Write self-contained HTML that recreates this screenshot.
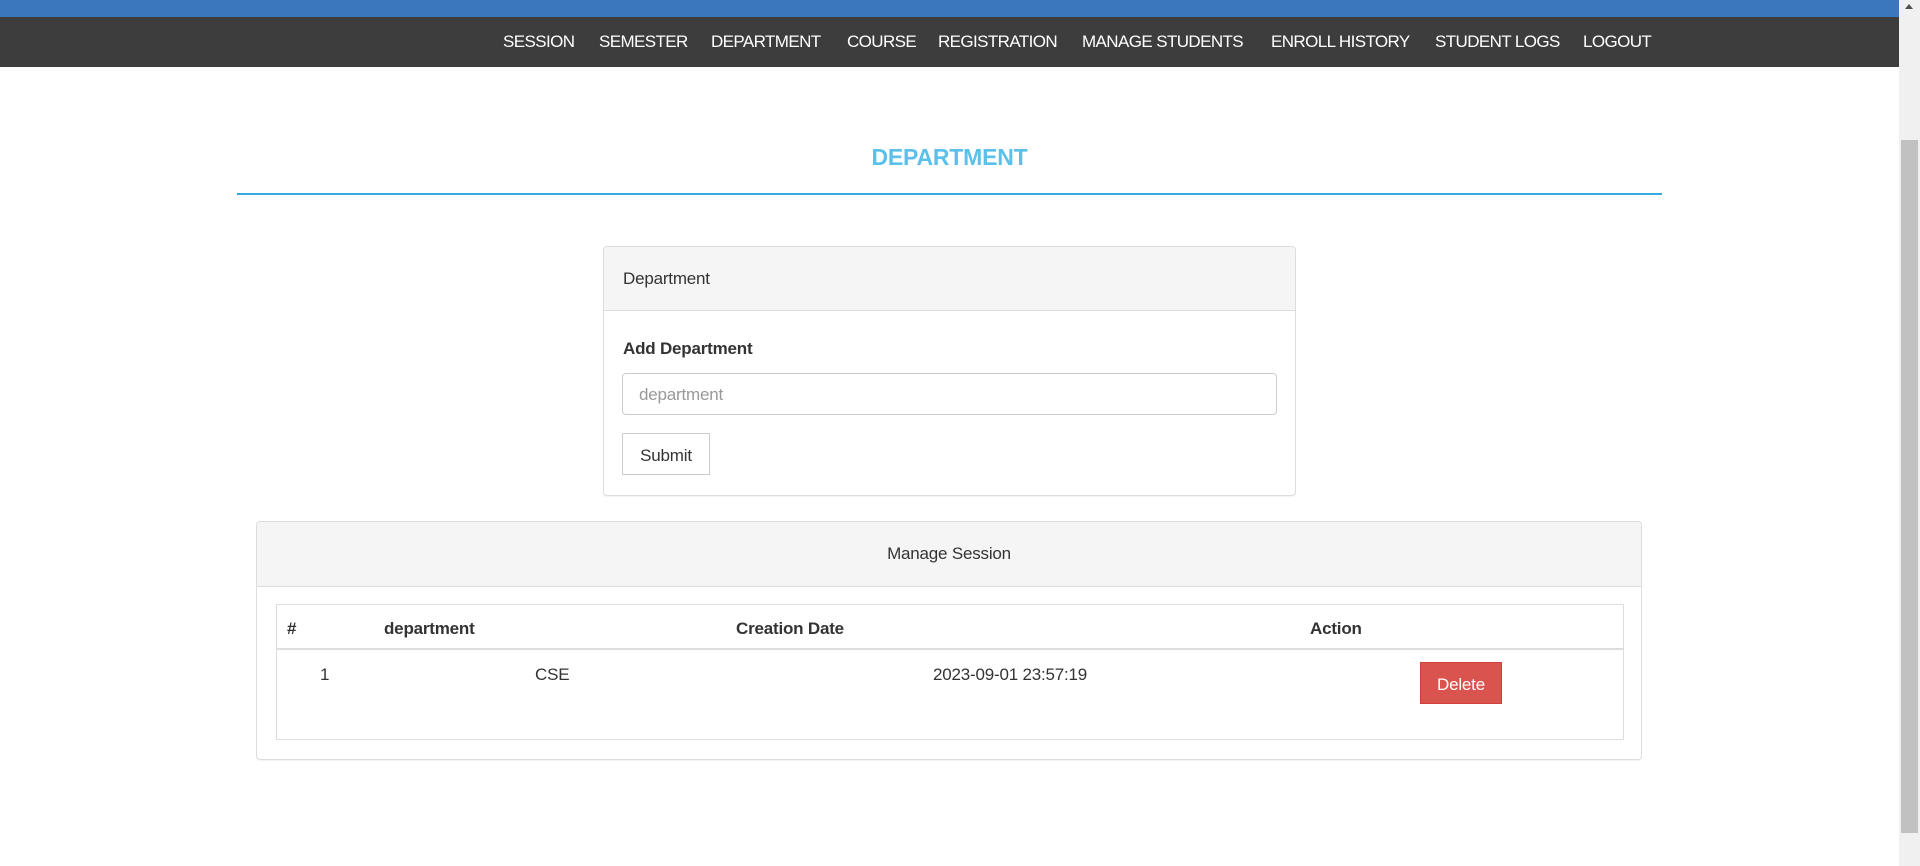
<!DOCTYPE html>
<html><head><meta charset="utf-8"><style>
*{box-sizing:border-box;margin:0;padding:0}
body{width:1920px;height:866px;overflow:hidden;background:#fff;font-family:"Liberation Sans",Arial,sans-serif;color:#333;font-size:17px;position:relative;letter-spacing:-0.2px}
.abs{position:absolute;white-space:nowrap}
.top{position:absolute;left:0;top:0;width:1899px;height:17px;background:#3a77bc}
.nav{position:absolute;left:0;top:17px;width:1899px;height:50px;background:#3d3d3d}
.nav span{position:absolute;top:15px;color:#fff;font-size:17px;letter-spacing:-0.6px}
.sb{position:absolute;left:1899px;top:0;width:21px;height:866px;background:#f0f0f0}
.thumb{position:absolute;left:1901px;top:140px;width:17px;height:693px;background:#c1c1c1}
.panel{position:absolute;border:1px solid #ddd;border-radius:4px;background:#fff;box-shadow:0 1px 1px rgba(0,0,0,.05)}
.ph{background:#f5f5f5;border-bottom:1px solid #ddd;border-radius:4px 4px 0 0}
</style></head><body>
<div class="top"></div>
<div class="nav">
<span style="left:503px">SESSION</span>
<span style="left:599px">SEMESTER</span>
<span style="left:711px">DEPARTMENT</span>
<span style="left:847px">COURSE</span>
<span style="left:938px">REGISTRATION</span>
<span style="left:1082px">MANAGE STUDENTS</span>
<span style="left:1271px">ENROLL HISTORY</span>
<span style="left:1435px">STUDENT LOGS</span>
<span style="left:1583px">LOGOUT</span>
</div>
<div class="sb"><div style="position:absolute;left:6px;top:4px;width:0;height:0;border-left:4px solid transparent;border-right:4px solid transparent;border-bottom:5px solid #505050"></div></div>
<div class="thumb"></div>

<div class="abs" style="left:0;width:1899px;text-align:center;top:144px;font-size:23px;font-weight:bold;color:#5bc0ea">DEPARTMENT</div>
<div class="abs" style="left:237px;top:193px;width:1425px;height:2px;background:#35a9e1"></div>

<div class="panel" style="left:603px;top:246px;width:693px;height:250px">
<div class="ph" style="height:64px"></div>
</div>
<div class="abs" style="left:623px;top:269px">Department</div>
<div class="abs" style="left:623px;top:339px;font-weight:bold">Add Department</div>
<div class="abs" style="left:622px;top:373px;width:655px;height:42px;border:1px solid #ccc;border-radius:4px;padding:11px 16px;color:#999">department</div>
<div class="abs" style="left:622px;top:433px;width:88px;height:42px;border:1px solid #ccc;padding:12px 0;text-align:center">Submit</div>

<div class="panel" style="left:256px;top:521px;width:1386px;height:239px">
<div class="ph" style="height:65px"></div>
</div>
<div class="abs" style="left:256px;width:1386px;text-align:center;top:544px">Manage Session</div>
<div class="abs" style="left:276px;top:604px;width:1348px;height:136px;border:1px solid #ddd"></div>
<div class="abs" style="left:277px;top:648px;width:1346px;height:2px;background:#ddd"></div>
<div class="abs" style="left:287px;top:619px;font-weight:bold">#</div>
<div class="abs" style="left:384px;top:619px;font-weight:bold">department</div>
<div class="abs" style="left:736px;top:619px;font-weight:bold">Creation Date</div>
<div class="abs" style="left:1310px;top:619px;font-weight:bold">Action</div>
<div class="abs" style="left:320px;top:665px">1</div>
<div class="abs" style="left:535px;top:665px">CSE</div>
<div class="abs" style="left:933px;top:665px">2023-09-01 23:57:19</div>
<div class="abs" style="left:1420px;top:662px;width:82px;height:42px;background:#d9534f;border:1px solid #d43f3a;color:#fff;text-align:center;padding:12px 0">Delete</div>
</body></html>
